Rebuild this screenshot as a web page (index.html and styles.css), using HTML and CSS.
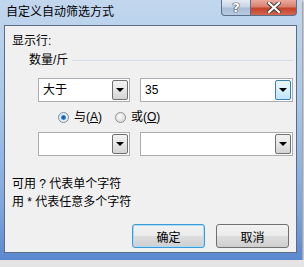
FILE: index.html
```html
<!DOCTYPE html>
<html lang="zh-CN">
<head>
    <meta charset="UTF-8">
    <title>自定义自动筛选方式</title>
    <link rel="stylesheet" href="styles.css">
</head>
<body>
    <div class="window">
        <div class="titlebar">
            <span class="title">自定义自动筛选方式</span>
            <div class="caption-buttons">
                <div class="cap-btn help">?</div>
                <div class="cap-btn close">
                    <svg width="14" height="11" viewBox="0 0 14 11">
                        <path d="M2 1 L12 10 M12 1 L2 10" stroke="#3a3a3a" stroke-width="4" stroke-linecap="square"/>
                        <path d="M2 1 L12 10 M12 1 L2 10" stroke="#fff" stroke-width="2.2" stroke-linecap="square"/>
                    </svg>
                </div>
            </div>
        </div>
        <div class="client">
            <div class="label">显示行:</div>
            <div class="group-label">
                <span>数量/斤</span>
                <div class="group-line"></div>
            </div>
            <div class="combo-row">
                <div class="combo small">
                    <span class="combo-text">大于</span>
                    <div class="combo-btn"><span class="arrow"></span></div>
                </div>
                <div class="combo wide">
                    <span class="combo-text">35</span>
                    <div class="combo-btn focus"><span class="arrow"></span></div>
                </div>
            </div>
            <div class="radio-row">
                <label class="radio"><span class="dot checked"></span><span>与(<u>A</u>)</span></label>
                <label class="radio"><span class="dot"></span><span>或(<u>O</u>)</span></label>
            </div>
            <div class="combo-row second">
                <div class="combo small">
                    <span class="combo-text"></span>
                    <div class="combo-btn"><span class="arrow"></span></div>
                </div>
                <div class="combo wide">
                    <span class="combo-text"></span>
                    <div class="combo-btn"><span class="arrow"></span></div>
                </div>
            </div>
            <div class="hint first">可用 ? 代表单个字符</div>
            <div class="hint">用 * 代表任意多个字符</div>
            <div class="buttons">
                <button class="btn default">确定</button>
                <button class="btn">取消</button>
            </div>
        </div>
    </div>
</body>
</html>
```

FILE: styles.css
```css
body {
    margin: 0;
    background: #e4e4e4;
    font-family: "Liberation Sans", "Noto Sans CJK SC", sans-serif;
    font-size: 12px;
    color: #000;
}
.window {
    width: 302px;
    height: 260px;
    background: linear-gradient(to bottom, #c2d7ee 0%, #a9c6e8 40%, #7ea6dc 80%, #5a88cf 100%);
    display: flex;
    flex-direction: column;
    box-shadow: 1px 1px 2px rgba(0, 0, 0, 0.4);
}
.titlebar {
    height: 25px;
    display: flex;
    justify-content: space-between;
    align-items: flex-start;
}
.title {
    margin: 4px 0 0 6px;
    line-height: 16px;
    font-size: 12px;
}
.caption-buttons {
    display: flex;
    margin-right: 5px;
}
.cap-btn {
    height: 16px;
    display: flex;
    align-items: center;
    justify-content: center;
    border: 1px solid #5a6f8c;
    border-top: none;
    box-sizing: border-box;
}
.help {
    width: 29px;
    border-radius: 0 0 0 4px;
    border-right: none;
    background: linear-gradient(to bottom, #e3ebf4 0%, #c7d6e7 45%, #a8bcd6 55%, #b9cbe2 100%);
    color: #fff;
    font-family: "DejaVu Sans", sans-serif;
    font-weight: bold;
    font-size: 13px;
    text-shadow: 0 0 1px #333, 0 0 1px #333, 0 0 1px #333;
}
.close {
    width: 47px;
    border-radius: 0 0 4px 0;
    background: linear-gradient(to bottom, #e9aa9d 0%, #da7f6d 45%, #c5412a 55%, #d4674e 100%);
}
.client {
    flex: 1;
    margin: 0 5px 7px 4px;
    background: #f0f0f0;
    border: 1px solid #5c6c84;
    padding: 7px 0 0 7px;
    display: flex;
    flex-direction: column;
}
.label {
    line-height: 16px;
}
.group-label {
    display: flex;
    align-items: center;
    margin: 3px 3px 0 17px;
    line-height: 16px;
}
.group-line {
    flex: 1;
    margin-left: 4px;
    border-top: 1px solid #d5dfe5;
}
.combo-row {
    display: flex;
    gap: 10px;
    margin: 10px 0 0 26px;
}
.combo-row.second {
    margin-top: 8px;
}
.combo {
    height: 24px;
    box-sizing: border-box;
    border: 1px solid #abadb3;
    background: #fff;
    display: flex;
    align-items: center;
    justify-content: space-between;
    padding: 1px;
}
.combo.small {
    width: 92px;
}
.combo.wide {
    width: 153px;
}
.combo-text {
    padding-left: 3px;
    line-height: 16px;
}
.combo-btn {
    width: 16px;
    height: 20px;
    box-sizing: border-box;
    border: 1px solid #707070;
    border-radius: 2px;
    background: linear-gradient(to bottom, #f3f3f3 0%, #e6e6e6 50%, #d4d4d4 100%);
    display: flex;
    align-items: center;
    justify-content: center;
}
.combo-btn.focus {
    border-color: #3c7fb1;
    background: linear-gradient(to bottom, #eaf6fd 0%, #d9f0fc 50%, #bee6fd 100%);
}
.arrow {
    width: 0;
    height: 0;
    border-left: 4px solid transparent;
    border-right: 4px solid transparent;
    border-top: 4px solid #000;
}
.radio-row {
    display: flex;
    gap: 13px;
    margin: 8px 0 0 46px;
    height: 14px;
    align-items: center;
}
.radio {
    display: flex;
    align-items: center;
    gap: 5px;
    line-height: 14px;
}
.dot {
    width: 11px;
    height: 11px;
    box-sizing: border-box;
    border-radius: 50%;
    border: 1px solid #8f8f8f;
    background: radial-gradient(circle at 40% 35%, #fafafa 0%, #e2e2e2 60%, #cfcfcf 100%);
}
.dot.checked {
    border-color: #7a8ea6;
    background: radial-gradient(circle at 50% 50%, #0d4e95 0%, #2a7fd0 30%, #7fb7ea 38%, #e9eef3 48%, #dfe4ea 100%);
}
.hint {
    line-height: 16px;
}
.hint.first {
    margin-top: 20px;
}
.hint + .hint {
    margin-top: 2px;
}
.buttons {
    display: flex;
    justify-content: flex-end;
    gap: 11px;
    margin: 14px 7px 0 0;
}
.btn {
    width: 73px;
    height: 24px;
    font-family: "Liberation Sans", "Noto Sans CJK SC", sans-serif;
    font-size: 12px;
    border: 1px solid #707070;
    border-radius: 3px;
    background: linear-gradient(to bottom, #f2f2f2 0%, #ebebeb 50%, #dddddd 51%, #cfcfcf 100%);
    padding: 0;
    color: #000;
}
.btn.default {
    border-color: #3c9ad8;
    box-shadow: inset 0 0 0 1px #a8dcf8;
}
```
